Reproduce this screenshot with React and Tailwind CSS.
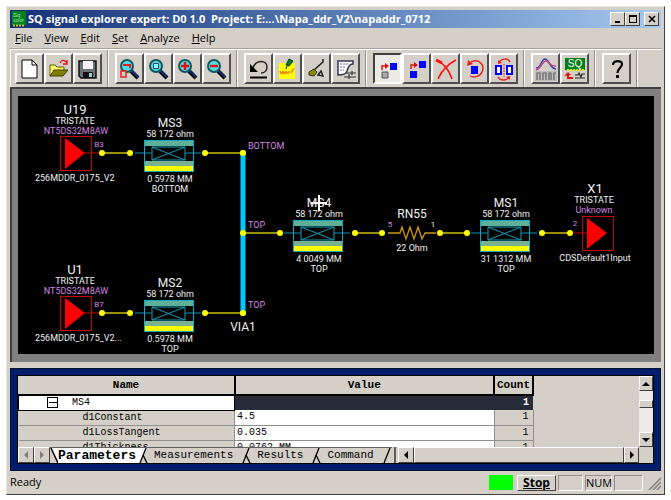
import React, { useState } from 'react';

const MENUS = ['File', 'View', 'Edit', 'Set', 'Analyze', 'Help'];

const Icon = ({ children }) => (
  <svg viewBox="0 0 24 24" className="w-6 h-6" fill="none" aria-hidden="true">
    {children}
  </svg>
);

const Lens = ({ children }) => (
  <Icon>
    <path d="M13 14L20 21" stroke="#000" strokeWidth="4" />
    <path d="M13 13L20 20" stroke="#1a2f7a" strokeWidth="2" />
    <circle cx="9" cy="9" r="6" fill="#4fdbe6" stroke="#14565e" strokeWidth="2" />
    {children}
  </Icon>
);

const NewIcon = () => (
  <Icon>
    <path d="M4 3H14L19 8V21H4Z" fill="#fff" stroke="#000" />
    <path d="M14 3V8H19" stroke="#000" />
  </Icon>
);

const OpenIcon = () => (
  <Icon>
    <path d="M3 19V8H8L10 10H17V13" fill="#ffff66" stroke="#5c5c00" />
    <path d="M3 19L7 13H21L16 19Z" fill="#808000" stroke="#404000" />
    <path d="M13 6C15 2 18 3 20 6M20 3V7H16" stroke="#e01010" strokeWidth="1.3" />
  </Icon>
);

const SaveIcon = () => (
  <Icon>
    <path d="M3 4H20V21H5L3 19Z" fill="#6b7474" stroke="#111" strokeWidth="1.5" />
    <path d="M7 4H17V12H7Z" fill="#f4f4f4" />
    <path d="M7 15H17V21H7Z" fill="#111" />
    <path d="M13 16H16V20H13Z" fill="#8fd0d8" />
  </Icon>
);

const ZoomAreaIcon = () => (
  <Lens>
    <path d="M5 8H12V11" stroke="#e02020" strokeWidth="2" />
    <path d="M3 14H8V20H3Z" fill="#d4d0c8" stroke="#e02020" strokeWidth="1.5" />
  </Lens>
);

const ZoomFitIcon = () => (
  <Lens>
    <path d="M6.500 6.500H11.500V11.500H6.500Z" fill="#8ff" stroke="#446" />
  </Lens>
);

const ZoomInIcon = () => (
  <Lens>
    <path d="M9 5V13M5 9H13" stroke="#e01010" strokeWidth="2.4" />
  </Lens>
);

const ZoomOutIcon = () => (
  <Lens>
    <path d="M5 9H13" stroke="#e01010" strokeWidth="2.4" />
  </Lens>
);

const UndoIcon = () => (
  <Icon>
    <path d="M6 11C9 2 20 3 20 10C20 14 17 16 14 16" stroke="#222" strokeWidth="1.5" />
    <path d="M3 7V15H11Z" fill="#000" />
    <path d="M3 20.500H20" stroke="#000" strokeWidth="2" />
  </Icon>
);

const NoteIcon = () => (
  <Icon>
    <path d="M3 6H19V22H3Z" fill="#ffff00" />
    <path d="M4 14C5 18 7 17 7 14C8 18 10 17 10 14C11 17 13 17 13 14M15 16L18 11" stroke="#f07010" strokeWidth="1.3" />
    <path d="M10 8L13 2L17 4L13 9Z" fill="#0a7a20" stroke="#063d10" />
    <path d="M11 9L10 12" stroke="#222" />
  </Icon>
);

const ProbeIcon = () => (
  <Icon>
    <path d="M18 2V5L9 13" stroke="#222" strokeWidth="1.6" />
    <path d="M4 15L9 12L12 15L9 19L4 18Z" fill="#8c8c18" stroke="#333300" />
    <path d="M13 18L16 14L18 19Z" stroke="#222" strokeWidth="1.5" />
  </Icon>
);

const SetupIcon = () => (
  <Icon>
    <path d="M3 4H19V7C14 7 14 12 13 14C12 17 10 18 4 18V5" fill="#fff" stroke="#333355" strokeWidth="1.5" />
    <path d="M6 7H15M6 10H12M6 13H10" stroke="#666688" strokeDasharray="2 1" />
    <path d="M12 16H22M10 20H22M15 17V22M18 14V18" stroke="#333" strokeWidth="1.2" />
  </Icon>
);

const MoveIcon = () => (
  <Icon>
    <path d="M14 6H21V13H14Z" fill="#0000ff" />
    <path d="M6 15H12V21H6Z" fill="#a8a8a8" stroke="#555" />
    <path d="M6 13V9H10" stroke="#e01010" strokeWidth="1.5" />
    <path d="M9 6L13 9L9 12Z" fill="#e01010" />
  </Icon>
);

const CopyIcon = () => (
  <Icon>
    <path d="M14 4H21V11H14ZM5 14H12V21H5Z" fill="#0000ff" />
    <path d="M6 12V8H10" stroke="#e01010" strokeWidth="1.5" />
    <path d="M9 5L13 8L9 11Z" fill="#e01010" />
  </Icon>
);

const DeleteIcon = () => (
  <Icon>
    <path d="M3 3C9 6 15 13 18 22M22 3C14 7 8 13 4 22" stroke="#ff1010" strokeWidth="1.6" />
    <path d="M2 3L8 6" stroke="#ff1010" strokeWidth="3" />
  </Icon>
);

const RotateIcon = () => (
  <Icon>
    <path d="M8 9H15V17H8Z" fill="#0000ff" />
    <path d="M8 5C17 1 22 9 19 15C17 20 10 21 7 19" stroke="#f02020" strokeWidth="1.5" />
    <path d="M4 9L5 3L10 7Z" fill="#f02020" />
  </Icon>
);

const MirrorIcon = () => (
  <Icon>
    <path d="M4 9H9V17H4ZM15 9H20V17H15Z" fill="#fff" stroke="#0000ff" strokeWidth="2" />
    <path d="M7 6C9 1 16 1 18 5M17 20C15 24 8 24 6 20" stroke="#f02020" strokeWidth="1.5" />
    <path d="M6 7V3L10 6ZM18 19V23L14 20Z" fill="#f02020" />
    <path d="M12 7V20" stroke="#f02020" strokeDasharray="2 1" />
  </Icon>
);

const WaveIcon = () => (
  <Icon>
    <path d="M1 14H23V24H1Z" fill="#bdbdbd" />
    <path d="M2 11C7 12 7 2 11 2C15 2 16 12 22 12" stroke="#3a3aa8" strokeWidth="1.5" />
    <path d="M2 13C8 11 8 4 12 4C15 4 16 10 22 9" stroke="#c05090" strokeWidth="1.5" />
    <path d="M3 23V16H6V23M9 23V16H12V23M15 23V16H17V23M20 23V16H22" stroke="#666" strokeWidth="1.2" />
  </Icon>
);

const SqIcon = () => (
  <Icon>
    <path d="M2 1H22V13H2Z" fill="#008018" />
    <text x="12" y="10" textAnchor="middle" fontSize="10" fill="#fff" fontFamily="Liberation Sans">SQ</text>
    <path d="M4 13H21" stroke="#e8e810" strokeWidth="2" strokeDasharray="2 1" />
    <path d="M5 17V21H10" stroke="#e01010" strokeWidth="2" />
    <path d="M1 19L5 15L8 18Z" fill="#e01010" />
    <path d="M12 18H15L16 16L18 20L19 17H22M12 21H22" stroke="#222" strokeWidth="1.2" />
  </Icon>
);

const HelpIcon = () => (
  <Icon>
    <path d="M8 8C8 3 17 3 17 7C17 11 12.500 11 12.500 16" stroke="#000" strokeWidth="2.2" />
    <path d="M11 18H14V21H11Z" fill="#000" />
  </Icon>
);

const TOOL_GROUPS = [
  [['New', NewIcon], ['Open', OpenIcon], ['Save', SaveIcon]],
  [['Zoom area', ZoomAreaIcon], ['Zoom fit', ZoomFitIcon], ['Zoom in', ZoomInIcon], ['Zoom out', ZoomOutIcon]],
  [['Undo', UndoIcon], ['Note', NoteIcon], ['Probe', ProbeIcon], ['Setup', SetupIcon]],
  [['Move', MoveIcon], ['Copy', CopyIcon], ['Delete', DeleteIcon], ['Rotate', RotateIcon], ['Mirror', MirrorIcon]],
  [['Waveform', WaveIcon], ['Signal explorer', SqIcon]],
  [['Help', HelpIcon]],
];

const ROWS = [
  { name: 'd1Constant', value: '4.5', count: 1 },
  { name: 'd1LossTangent', value: '0.035', count: 1 },
  { name: 'd1Thickness', value: '0.0762 MM', count: 1 },
];

const TABS = ['Parameters', 'Measurements', 'Results', 'Command'];

const Label = ({ x, y, size = 9, fill = '#f0f0f0', anchor = 'middle', children }) => (
  <text x={x} y={y} fontSize={size} fill={fill} textAnchor={anchor}>{children}</text>
);

const Dot = ({ x, y }) => <circle cx={x} cy={y} r="3" fill="#ffff00" />;

const Wire = ({ x1, x2, y }) => (
  <g>
    <path d={`M${x1} ${y}H${x2}`} stroke="#c8c000" strokeWidth="1.5" />
    <Dot x={x1} y={y} />
    <Dot x={x2} y={y} />
  </g>
);

// Buffer symbol, origin at the top left corner of its box
const Buffer = ({ x, y }) => (
  <g transform={`translate(${x} ${y})`}>
    <rect x="0.5" y="0.5" width="31" height="34" stroke="#c80000" />
    <path d="M5 2V33L25 17Z" fill="#ff0000" />
  </g>
);

// Microstrip segment with its name, impedance, length and layer
const Microstrip = ({ x, y, name, impedance, length, layer }) => (
  <g transform={`translate(${x} ${y})`}>
    <path d="M-9 13H8M41 13H57" stroke="#0090b8" />
    <rect x="0" y="0" width="50" height="6" fill="#60b098" />
    <rect x="0" y="21" width="50" height="5" fill="#78b090" />
    <rect x="0" y="26" width="50" height="5" fill="#ffff00" />
    <rect x="0.5" y="0.5" width="49" height="31" stroke="#10a8b8" />
    <path d="M8 7H41V20H8ZM8 7L41 20M41 7L8 20" stroke="#10a0b8" />
    <Label x={26} y={-13} size={12}>{name}</Label>
    <Label x={26} y={-3}>{impedance}</Label>
    <Label x={26} y={42}>{length}</Label>
    <Label x={26} y={52}>{layer}</Label>
  </g>
);

const Schematic = () => (
  <svg viewBox="0 0 636 258" className="block w-full bg-black font-[Roboto,sans-serif]" fill="none">
    {/* Drivers */}
    <Label x={57} y={18} size={13}>U19</Label>
    <Label x={57} y={28}>TRISTATE</Label>
    <Label x={58} y={38} fill="#d088e0">NT5DS32M8AW</Label>
    <Buffer x={42} y={40} />
    <path d="M67 57H84" stroke="#c80000" />
    <Label x={81} y={51} size={8} fill="#d088e0">B3</Label>
    <Label x={17} y={85} anchor="start">256MDDR_0175_V2</Label>

    <Label x={57} y={178} size={13}>U1</Label>
    <Label x={57} y={188}>TRISTATE</Label>
    <Label x={58} y={198} fill="#d088e0">NT5DS32M8AW</Label>
    <Buffer x={42} y={200} />
    <path d="M67 217H84" stroke="#c80000" />
    <Label x={81} y={211} size={8} fill="#d088e0">B7</Label>
    <Label x={17} y={245} anchor="start">256MDDR_0175_V2...</Label>

    {/* Wires */}
    <Wire x1={84} x2={112} y={57} />
    <Wire x1={84} x2={112} y={217} />
    <Wire x1={187} x2={225} y={57} />
    <Wire x1={187} x2={225} y={217} />
    <path d="M225 57V217" stroke="#00c8ff" strokeWidth="5" />
    <Wire x1={225} x2={262} y={137} />
    <Wire x1={337} x2={364} y={137} />
    <Wire x1={422} x2={449} y={137} />
    <Wire x1={524} x2={552} y={137} />
    <Dot x={225} y={57} />
    <Dot x={225} y={217} />

    <Microstrip x={126} y={44} name="MS3" impedance="58 172 ohm" length="0 5978 MM" layer="BOTTOM" />
    <Microstrip x={126} y={204} name="MS2" impedance="58 172 ohm" length="0.5978 MM" layer="TOP" />
    <Microstrip x={275} y={124} name="MS4" impedance="58 172 ohm" length="4 0049 MM" layer="TOP" />
    <Microstrip x={462} y={124} name="MS1" impedance="58 172 ohm" length="31 1312 MM" layer="TOP" />
    <path d="M293 107H309M301 99V115" stroke="#fff" strokeWidth="2" />

    {/* Via */}
    <Label x={230} y={53} anchor="start" fill="#d088e0">BOTTOM</Label>
    <Label x={230} y={132} anchor="start" fill="#d088e0">TOP</Label>
    <Label x={230} y={212} anchor="start" fill="#d088e0">TOP</Label>
    <Label x={225} y={235} size={12}>VIA1</Label>

    {/* Resistor */}
    <path d="M370 137H382L384 131L388 143L392 131L396 143L400 131L404 143L407 137H418" stroke="#c89810" strokeWidth="1.3" />
    <Label x={394} y={122} size={12}>RN55</Label>
    <Label x={372} y={131} size={8} fill="#d088e0">5</Label>
    <Label x={415} y={131} size={8}>1</Label>
    <Label x={394} y={155}>22 Ohm</Label>

    {/* Receiver */}
    <Label x={577} y={97} size={13}>X1</Label>
    <Label x={576} y={107}>TRISTATE</Label>
    <Label x={576} y={117} fill="#d088e0">Unknown</Label>
    <Label x={557} y={130} size={8} fill="#d088e0">2</Label>
    <path d="M556 137H570" stroke="#c80000" />
    <Buffer x={564} y={120} />
    <Label x={577} y={165}>CDSDefault1Input</Label>
  </svg>
);

const Arrow = ({ d, fill = '#000' }) => (
  <svg viewBox="0 0 8 8" className="w-2 h-2" aria-hidden="true">
    <path d={d} fill={fill} />
  </svg>
);

const bevel = 'flex items-center justify-center bg-[#d4d0c8] border border-t-white border-l-white border-b-[#404040] border-r-[#404040]';

export default function App() {
  const [tool, setTool] = useState('Move');
  const [tab, setTab] = useState('Parameters');
  const [open, setOpen] = useState(true);

  return (
    <div className="min-h-screen bg-white p-[6px] text-black font-['Open_Sans','Noto_Sans',sans-serif]">
      <div className="bg-[#d4d0c8] border border-[#e8e6e0] border-r-[#404040] border-b-[#404040] px-[3px] pt-[3px]">
        {/* Title bar */}
        <header className="flex items-center h-[18px] pl-[2px] pr-[2px] bg-linear-to-r from-[#143078] to-[#a6caf0]">
          <svg viewBox="0 0 14 16" className="w-[14px] h-4 mr-[2px]" aria-hidden="true">
            <rect width="14" height="14" fill="#008020" />
            <text x="1" y="6" fontSize="6" fill="#a8e0a8" fontFamily="Liberation Sans">Sq</text>
            <text x="1" y="11" fontSize="5" fill="#a8e0a8" fontFamily="Liberation Sans">xplor</text>
            <path d="M1 14.500H13" stroke="#c8c820" strokeWidth="2" strokeDasharray="2 1" />
          </svg>
          <h1 className="flex-1 text-[11px] font-bold text-white whitespace-pre truncate">{'SQ signal explorer expert: D0 1.0  Project: E:...\\Napa_ddr_V2\\napaddr_0712'}</h1>
          <button aria-label="Minimize" className={`${bevel} w-[15px] h-[14px]`}>
            <Arrow d="M1 6H6V8H1Z" />
          </button>
          <button aria-label="Maximize" className={`${bevel} w-[15px] h-[14px]`}>
            <Arrow d="M0 0H8V8H0ZM1 2V7H7V2Z" />
          </button>
          <button aria-label="Close" className={`${bevel} w-[15px] h-[14px] ml-1`}>
            <svg viewBox="0 0 8 8" className="w-2 h-2" aria-hidden="true">
              <path d="M1 1L7 7M7 1L1 7" stroke="#000" strokeWidth="1.6" />
            </svg>
          </button>
        </header>

        {/* Menu */}
        <nav className="flex items-center gap-3 h-[21px] px-[5px] text-[11px] border-b border-[#a8a49c]">
          {MENUS.map((menu) => (
            <button key={menu}>
              <span className="underline">{menu[0]}</span>{menu.slice(1)}
            </button>
          ))}
        </nav>

        {/* Toolbar */}
        <div className="flex h-[38px] border-t border-white">
          {TOOL_GROUPS.map((group) => (
            <div key={group[0][0]} className="flex items-center pl-[6px] pr-[5px] first:pl-1 border-l border-l-white border-r border-r-[#909090]">
              {group.map(([label, ToolIcon]) => (
                <button
                  key={label}
                  aria-label={label}
                  onClick={() => setTool(label)}
                  className={tool === label
                    ? 'flex items-center justify-center w-[29px] h-[31px] bg-[#eceae6] border-2 border-t-[#404040] border-l-[#404040] border-b-white border-r-white'
                    : 'flex items-center justify-center w-[29px] h-[31px] border-2 border-t-white border-l-white border-b-[#505050] border-r-[#505050]'}
                >
                  <ToolIcon />
                </button>
              ))}
            </div>
          ))}
          <div className="flex-1 border-l border-white" />
        </div>

        {/* Canvas */}
        <main className="bg-[#808080] border-t-2 border-l-2 border-[#404040] pt-[7px] pb-2 pl-[6px] pr-[7px]">
          <Schematic />
        </main>

        {/* Parameter sheet */}
        <section className="mt-[6px] bg-[#001c6c] border border-[#0a1030] p-[6px] font-['Liberation_Mono',monospace]">
          <div className="border border-black bg-[#d4d0c8]">
            <div className="flex h-[71px]">
              <div className="flex-1 h-full overflow-hidden">
                <table className="w-full table-fixed border-collapse text-[10px] leading-[14px]">
                  <thead>
                    <tr className="h-[19px] text-[11px] border-b-2 border-black">
                      <th className="w-[216px] border-r-2 border-black">Name</th>
                      <th className="border-r-2 border-black">Value</th>
                      <th className="w-[39px] border-r-2 border-black">Count</th>
                    </tr>
                  </thead>
                  <tbody>
                    <tr className="h-[15px]">
                      <td className="bg-white border border-black">
                        <div className="flex items-center h-[13px] pl-7">
                          <button
                            aria-label="Toggle MS4"
                            onClick={() => setOpen(!open)}
                            className="flex items-center justify-center w-[11px] h-[11px] border border-black"
                          >
                            <Arrow d="M0 3H8V4H0Z" />
                          </button>
                          <span className="ml-[14px]">MS4</span>
                        </div>
                      </td>
                      <td className="bg-[#282c38]" />
                      <td className="bg-[#282c38] text-white font-bold text-right pr-1">1</td>
                    </tr>
                    {open && ROWS.map((row) => (
                      <tr key={row.name} className="h-[15px] border-b border-[#909090]">
                        <td className="pl-16 border-r border-[#909090]">{row.name}</td>
                        <td className="pl-[2px] bg-white border-r border-[#909090]">{row.value}</td>
                        <td className="pr-1 text-right border-r border-[#909090]">{row.count}</td>
                      </tr>
                    ))}
                  </tbody>
                </table>
              </div>
              <div className="w-[105px]" />
              <div className="flex flex-col w-[14px] bg-[#ecebe8]">
                <button aria-label="Scroll up" className={`${bevel} h-[15px]`}><Arrow d="M0 6L4 2L8 6Z" /></button>
                <div className="h-[9px]" />
                <div className={`${bevel} h-2`} />
                <div className="flex-1" />
                <button aria-label="Scroll down" className={`${bevel} h-[15px]`}><Arrow d="M0 2L4 6L8 2Z" /></button>
              </div>
            </div>

            {/* Sheet tabs */}
            <div className="flex h-4">
              <button aria-label="Previous tab" className={`${bevel} w-4`}><Arrow d="M6 0L2 4L6 8Z" fill="#808080" /></button>
              <button aria-label="Next tab" className={`${bevel} w-4`}><Arrow d="M2 0L6 4L2 8Z" fill="#808080" /></button>
              <div className="flex border-t border-[#606060]">
                <svg viewBox="0 0 8 15" className="w-2 h-[15px]" aria-hidden="true">
                  <path d="M1 0L8 15V0Z" fill="#fff" />
                  <path d="M1 0L8 15" stroke="#000" strokeWidth="1.5" />
                </svg>
                {TABS.map((name, i) => (
                  <React.Fragment key={name}>
                    <button
                      onClick={() => setTab(name)}
                      className={tab === name ? 'bg-white text-[13px] leading-[15px] font-bold' : 'px-[6px] text-[11px] leading-[15px]'}
                    >
                      {name}
                    </button>
                    <svg viewBox="0 0 12 15" className="w-3 h-[15px]" aria-hidden="true">
                      {tab === name && <path d="M0 0H10L4 15H0Z" fill="#fff" />}
                      <path d="M10 0L4 15" stroke="#000" strokeWidth="1.3" />
                      {i < TABS.length - 1 && <path d="M7 7L11 15" stroke="#000" strokeWidth="1.3" />}
                    </svg>
                  </React.Fragment>
                ))}
              </div>
              <div className="w-1 border-r-2 border-[#606060]" />
              <button aria-label="Scroll left" className={`${bevel} w-4 ml-[2px]`}><Arrow d="M6 0L2 4L6 8Z" /></button>
              <div className={`${bevel} flex-1`} />
              <button aria-label="Scroll right" className={`${bevel} w-[15px]`}><Arrow d="M2 0L6 4L2 8Z" /></button>
              <div className="w-[14px]" />
            </div>
          </div>
        </section>

        {/* Status bar */}
        <footer className="flex items-center gap-[2px] h-[23px] text-[11px]">
          <span className="flex-1">Ready</span>
          <span className="w-6 h-[15px] bg-[#00ff00]" />
          <button className={`${bevel} w-[39px] h-4 ml-[2px] text-[12px] font-bold underline`}>Stop</button>
          <span className="w-[25px] h-4 border border-t-[#909090] border-l-[#909090] border-b-white border-r-white" />
          <span className="w-[27px] h-4 text-[11px] leading-[14px] text-center border border-t-[#909090] border-l-[#909090] border-b-white border-r-white">NUM</span>
          <span className="w-[29px] h-4 border border-t-[#909090] border-l-[#909090] border-b-white border-r-white" />
          <svg viewBox="0 0 14 14" className="w-[14px] h-[14px] ml-[2px]" aria-hidden="true">
            <path d="M2 14L14 2M6 14L14 6M10 14L14 10" stroke="#808080" strokeWidth="1.5" />
          </svg>
        </footer>
      </div>
    </div>
  );
}
